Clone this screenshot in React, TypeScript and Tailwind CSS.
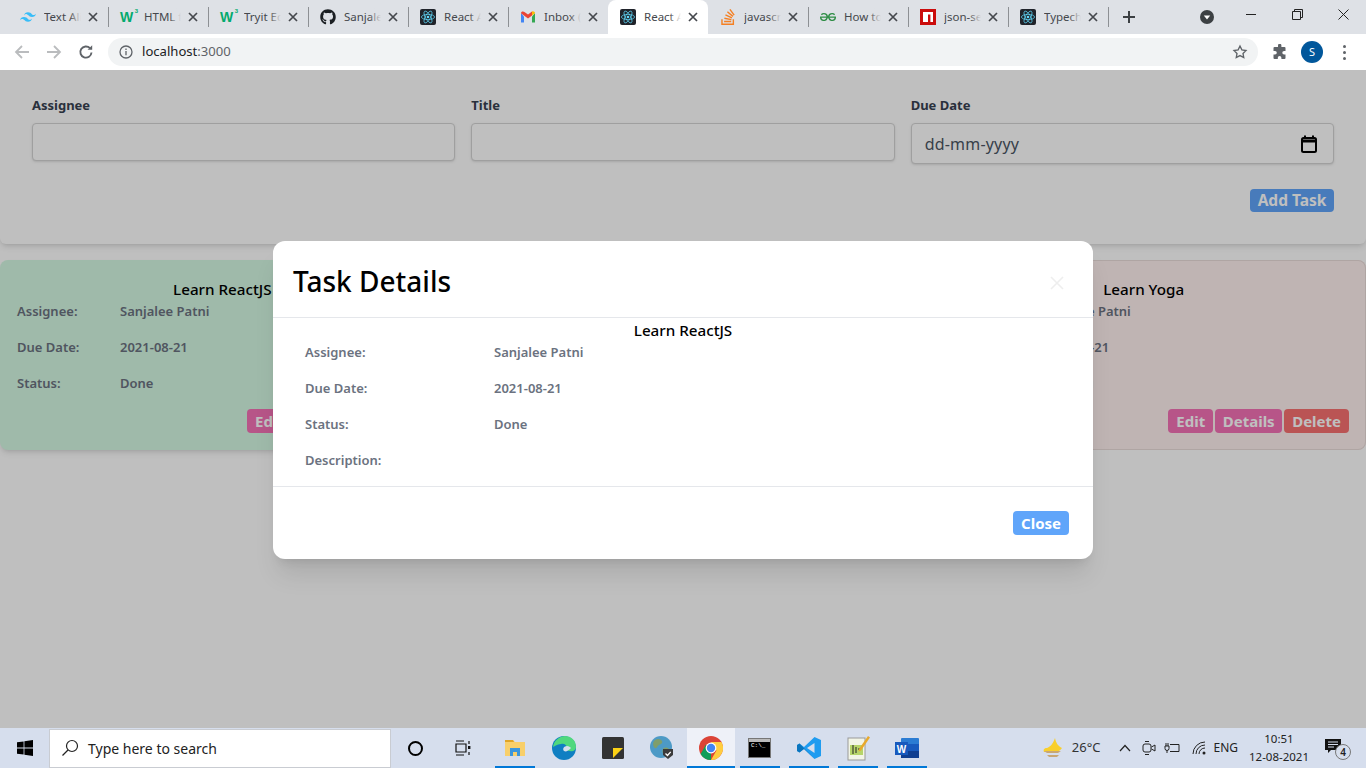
import { FaGithub } from "react-icons/fa";
import { SiGeeksforgeeks, SiStackoverflow, SiTailwindcss } from "react-icons/si";

function ReactIcon() {
  return (
    <svg width="16" height="16" viewBox="0 0 16 16">
      <rect width="16" height="16" rx="2" fill="#20232a" />
      <g fill="none" stroke="#61dafb" strokeWidth="0.7">
        <ellipse cx="8" cy="8" rx="6.6" ry="2.6" />
        <ellipse cx="8" cy="8" rx="6.6" ry="2.6" transform="rotate(60 8 8)" />
        <ellipse cx="8" cy="8" rx="6.6" ry="2.6" transform="rotate(120 8 8)" />
      </g>
      <circle cx="8" cy="8" r="1.3" fill="#61dafb" />
    </svg>
  );
}

function W3Icon() {
  return (
    <span className="relative flex h-4 w-4 items-center font-['Liberation_Sans',sans-serif] text-[14px] leading-none font-bold text-[#04aa6d]">
      W<span className="absolute -top-px -right-0.5 text-[6px] text-[#04aa6d]">3</span>
    </span>
  );
}

function GmailIcon() {
  return (
    <svg width="16" height="16" viewBox="0 0 16 16">
      <path d="M1 4v9.5h3V7.5z" fill="#4285f4" />
      <path d="M15 4v9.5h-3V7.5z" fill="#34a853" />
      <path d="M1 4.2 8 9.4l4-3V2.6l-4 3-3.2-2.4C3 1.9 1 2.6 1 4.2z" fill="#ea4335" />
      <path d="M12 2.6v3.8l3-2.2c0-1.6-2-2.3-3-1.6z" fill="#fbbc04" />
    </svg>
  );
}

function NpmIcon() {
  return (
    <svg width="16" height="16" viewBox="0 0 16 16">
      <rect width="16" height="16" fill="#cb0c0c" />
      <path d="M3 3h10v10h-2.6V5.6H8V13H3z" fill="#fff" />
    </svg>
  );
}

const tabs = [
  { title: "Text Ali", icon: <SiTailwindcss size={16} color="#38bdf8" /> },
  { title: "HTML f", icon: <W3Icon /> },
  { title: "Tryit Ed", icon: <W3Icon /> },
  { title: "Sanjale", icon: <FaGithub size={16} color="#1b1f23" /> },
  { title: "React A", icon: <ReactIcon /> },
  { title: "Inbox (", icon: <GmailIcon />, noSep: true },
  { title: "React A", icon: <ReactIcon />, active: true, noSep: true },
  { title: "javascr", icon: <SiStackoverflow size={16} color="#f48024" /> },
  { title: "How to", icon: <SiGeeksforgeeks size={16} color="#2f8d46" /> },
  { title: "json-se", icon: <NpmIcon /> },
  { title: "Typech", icon: <ReactIcon /> },
];

function TabClose() {
  return (
    <svg width="10" height="10" viewBox="0 0 10 10" stroke="#45484d" strokeWidth="1.7" className="shrink-0">
      <path d="M1 1l8 8M9 1l-8 8" />
    </svg>
  );
}

function BrowserChrome() {
  return (
    <div className="shrink-0 font-['Noto_Sans',sans-serif]">
      <div className="flex h-[34px] items-center bg-[#dee1e6] pl-2">
        {tabs.map((tab, i) => (
          <div
            key={i}
            className={
              tab.active
                ? "flex h-[34px] w-[100px] shrink-0 items-center rounded-t-lg bg-white pl-3"
                : "flex h-[34px] w-[100px] shrink-0 items-center pl-3"
            }
          >
            <span className="flex w-6 shrink-0 items-center">{tab.icon}</span>
            <div className="relative w-[37px] shrink-0 overflow-hidden text-[11.5px] whitespace-nowrap text-[#45484d]">
              {tab.title}
              <span
                className={
                  tab.active
                    ? "absolute inset-y-0 right-0 w-3 bg-gradient-to-r from-transparent to-white"
                    : "absolute inset-y-0 right-0 w-3 bg-gradient-to-r from-transparent to-[#dee1e6]"
                }
              />
            </div>
            <span className="ml-[7px] flex w-[10px] shrink-0 justify-center">
              <TabClose />
            </span>
            {!tab.noSep && <span className="-mr-px ml-auto h-[20px] w-px shrink-0 bg-[#8d9094]" />}
          </div>
        ))}
        <svg width="14" height="14" viewBox="0 0 14 14" stroke="#3c4043" strokeWidth="2" className="ml-[14px]">
          <path d="M7 1v12M1 7h12" />
        </svg>
        <svg width="14" height="14" viewBox="0 0 14 14" className="ml-[64px]">
          <circle cx="7" cy="7" r="7" fill="#3c4043" />
          <path d="M3.8 5.5h6.4L7 9.5z" fill="#fff" />
        </svg>
        <div className="ml-auto flex h-full items-start">
          <span className="flex h-[28px] w-[46px] items-center justify-center">
            <span className="h-px w-[10px] bg-[#222]" />
          </span>
          <span className="flex h-[28px] w-[46px] items-center justify-center">
            <svg width="11" height="11" viewBox="0 0 11 11" fill="none" stroke="#222">
              <path d="M.5 2.5h8v8h-8zM2.5 2.5v-2h8v8h-2" />
            </svg>
          </span>
          <span className="flex h-[28px] w-[46px] items-center justify-center">
            <svg width="11" height="11" viewBox="0 0 11 11" stroke="#222">
              <path d="M.5.5l10 10M10.5.5l-10 10" />
            </svg>
          </span>
        </div>
      </div>
      <div className="flex h-9 items-center bg-white">
        <svg width="16" height="16" viewBox="0 0 16 16" fill="none" stroke="#babcbe" strokeWidth="1.8" className="ml-[14px]">
          <path d="M15 8H2M8 2 2 8l6 6" />
        </svg>
        <svg width="16" height="16" viewBox="0 0 16 16" fill="none" stroke="#babcbe" strokeWidth="1.8" className="ml-4">
          <path d="M1 8h13M8 2l6 6-6 6" />
        </svg>
        <svg width="16" height="16" viewBox="0 0 16 16" fill="none" stroke="#5f6368" strokeWidth="1.9" className="ml-4">
          <path d="M13.5 8.5A5.6 5.6 0 1 1 12 4.2" />
          <path d="M14.2 1.2v4.6H9.6z" fill="#5f6368" stroke="none" />
        </svg>
        <div className="ml-[14px] flex h-7 flex-1 items-center rounded-full bg-[#f1f3f4] pl-[11px]">
          <svg width="14" height="14" viewBox="0 0 14 14" fill="none" stroke="#5f6368" strokeWidth="1.3">
            <circle cx="7" cy="7" r="6" />
            <path d="M7 6v4.2M7 3.6v1.4" />
          </svg>
          <span className="ml-[9px] text-[13.1px] text-[#202124]">
            localhost<span className="text-[#5f6368]">:3000</span>
          </span>
          <svg width="16" height="16" viewBox="0 0 24 24" fill="none" stroke="#5f6368" strokeWidth="2" className="mr-[10px] ml-auto">
            <path d="m12 3 2.8 5.8 6.2.9-4.5 4.4 1.1 6.3L12 17.4l-5.6 3 1.1-6.3L3 9.7l6.2-.9z" />
          </svg>
        </div>
        <svg width="16" height="16" viewBox="0 0 16 16" fill="#5f6368" className="ml-[14px]">
          <path d="M6 1.5a1.7 1.7 0 0 1 3.4 0V3h3.1a1 1 0 0 1 1 1v3h-1.4a1.8 1.8 0 0 0 0 3.6h1.4V14a1 1 0 0 1-1 1H9.4v-1.3a1.8 1.8 0 0 0-3.6 0V15H2.5a1 1 0 0 1-1-1v-3.4H3a1.8 1.8 0 0 0 0-3.6H1.5V4a1 1 0 0 1 1-1H6z" />
        </svg>
        <span className="ml-[13px] flex h-[22px] w-[22px] items-center justify-center rounded-full bg-[#01579b] text-[11px] text-white">
          S
        </span>
        <span className="mr-5 ml-5 flex flex-col gap-[3px]">
          <span className="h-[3px] w-[3px] rounded-full bg-[#5f6368]" />
          <span className="h-[3px] w-[3px] rounded-full bg-[#5f6368]" />
          <span className="h-[3px] w-[3px] rounded-full bg-[#5f6368]" />
        </span>
      </div>
    </div>
  );
}

function Field({ label }: { label: string }) {
  return (
    <div>
      <label className="mb-2 block text-[13px] leading-5 font-bold text-[#374151]">{label}</label>
      <input className="block h-[38px] w-full rounded border border-[#d4d4d4] bg-white shadow" />
    </div>
  );
}

function TaskFields({ rows }: { rows: string[][] }) {
  return (
    <>
      {rows.map(([label, value]) => (
        <div key={label} className="mb-4 flex h-5 items-center text-[13px] leading-5 font-semibold text-[#6b7280]">
          <span className="w-[103px] shrink-0">{label}</span>
          <span>{value}</span>
        </div>
      ))}
    </>
  );
}

function TaskCard({ title, className, status }: { title: string; className: string; status: string }) {
  return (
    <div className={`rounded-lg pt-[18px] pr-[17px] pb-[17px] pl-[17px] ${className}`}>
      <h3 className="text-center text-[15.2px] leading-[23px] font-medium text-black">{title}</h3>
      <TaskFields
        rows={[
          ["Assignee:", "Sanjalee Patni"],
          ["Due Date:", "2021-08-21"],
          ["Status:", status],
        ]}
      />
      <div className="flex justify-end gap-0.5">
        <button className="h-6 rounded bg-[#f472b6] px-2 text-[15px] leading-6 font-bold text-white">Edit</button>
        <button className="h-6 rounded bg-[#f472b6] px-[7.5px] text-[15px] leading-6 font-bold text-white">Details</button>
        <button className="h-6 rounded bg-[#f87171] px-2 text-[15px] leading-6 font-bold text-white">Delete</button>
      </div>
    </div>
  );
}

function TaskModal() {
  const rows = [
    ["Assignee:", "Sanjalee Patni"],
    ["Due Date:", "2021-08-21"],
    ["Status:", "Done"],
    ["Description:", ""],
  ];
  return (
    <div className="absolute inset-0 flex items-start justify-center bg-black/25 pt-[171px]">
      <div className="w-[820px] rounded-xl bg-white shadow-xl">
        <div className="flex h-[77px] items-center justify-between border-b border-[#e5e7eb] pr-[29px] pl-5">
          <h2 className="mt-1 text-[28px] leading-9 font-medium text-black">Task Details</h2>
          <svg width="14" height="14" viewBox="0 0 14 14" stroke="#eeeeee" strokeWidth="1.6" className="mt-[7px]">
            <path d="M1 1l12 12M13 1 1 13" />
          </svg>
        </div>
        <div className="border-b border-[#e5e7eb] pt-px">
          <h3 className="text-center text-[15.2px] leading-[23px] font-medium text-black">Learn ReactJS</h3>
          <div className="px-8">
            {rows.map(([label, value]) => (
              <div key={label} className="mb-4 flex h-5 items-center text-[13px] leading-5 font-semibold text-[#6b7280]">
                <span className="w-[189px] shrink-0">{label}</span>
                <span>{value}</span>
              </div>
            ))}
          </div>
        </div>
        <div className="flex justify-end p-6">
          <button className="h-6 rounded bg-[#60a5fa] px-2 text-[15px] leading-6 font-bold text-white">Close</button>
        </div>
      </div>
    </div>
  );
}

function TaskPage() {
  return (
    <main className="relative min-h-0 flex-1 overflow-hidden bg-white font-['Noto_Sans',sans-serif]">
      <section className="rounded-b-md bg-white px-8 pt-[25px] pb-8 shadow-md">
        <div className="grid grid-cols-3 items-start gap-4">
          <Field label="Assignee" />
          <Field label="Title" />
          <div>
            <label className="mb-2 block text-[13px] leading-5 font-bold text-[#374151]">Due Date</label>
            <div className="flex h-[41px] items-center justify-between rounded border border-[#d4d4d4] bg-white pr-4 pl-[13px] shadow">
              <span className="text-[16px] tracking-[0.2px] text-[#4b5563]">dd-mm-yyyy</span>
              <svg width="16" height="18" viewBox="0 0 16 18" fill="none" stroke="#000" strokeWidth="2">
                <rect x="1" y="3" width="14" height="14" rx="1.5" />
                <path d="M1 6h14" strokeWidth="3" />
                <path d="M4 .5v3M12 .5v3" />
              </svg>
            </div>
          </div>
        </div>
        <div className="mt-[25px] flex justify-end">
          <button className="h-[23px] w-[84px] rounded bg-[#60a5fa] text-[15.5px] leading-[23px] font-bold text-white">
            Add Task
          </button>
        </div>
      </section>
      <section className="mt-4 grid grid-cols-3 gap-4">
        <TaskCard title="Learn ReactJS" className="bg-[#d4f8e3] shadow-md" status="Done" />
        <div />
        <TaskCard title="Learn Yoga" className="bg-[#fff1ef] ring-1 ring-[#eadcda] ring-inset" status="Pending" />
      </section>
      <TaskModal />
    </main>
  );
}

function Slot({ children, active, line, className }: { children: React.ReactNode; active?: boolean; line?: boolean; className?: string }) {
  return (
    <div
      className={`relative flex h-10 shrink-0 items-center justify-center ${active ? "w-[48px] bg-[#eef1f8]" : "w-[49px]"} ${className ?? ""}`}
    >
      {children}
      {line && (
        <span className={`absolute bottom-0 h-0.5 bg-[#0078d7] ${active ? "inset-x-0" : "right-[4px] left-[5px]"}`} />
      )}
    </div>
  );
}

function Taskbar() {
  return (
    <footer className="flex h-10 shrink-0 items-center bg-[#d6deed] font-['Noto_Sans',sans-serif]">
      <div className="flex h-10 w-[49px] shrink-0 items-center justify-center">
        <svg width="16" height="16" viewBox="0 0 16 16" fill="#000">
          <path d="M0 2.3 6.6 1.4v6.1H0zM7.4 1.3 16 0v7.5H7.4zM0 8.5h6.6v6.1L0 13.7zM7.4 8.5H16V16l-8.6-1.3z" />
        </svg>
      </div>
      <div className="flex h-[39px] w-[342px] shrink-0 items-center border border-[#c9ccd2] bg-white pl-[11px]">
        <svg width="18" height="18" viewBox="0 0 18 18" fill="none" stroke="#222" strokeWidth="1.2">
          <circle cx="11" cy="7" r="5.5" />
          <path d="M7 11 1.5 16.5" />
        </svg>
        <span className="ml-[9px] text-[14px] text-[#222]">Type here to search</span>
      </div>
      <Slot>
        <span className="h-[15px] w-[15px] rounded-full border-2 border-black" />
      </Slot>
      <Slot>
        <svg width="18" height="16" viewBox="0 0 18 16" fill="none" stroke="#111" strokeWidth="1.2" className="-ml-[3px]">
          <path d="M2 1h8M2 15h8M2 4h10v8H2zM15 1v3M15 12v3" />
          <rect x="14" y="6" width="2.4" height="3" fill="#111" stroke="none" />
        </svg>
      </Slot>
      <Slot line className="ml-px">
        <svg width="22" height="20" viewBox="0 0 22 20">
          <path d="M1 2h8l2 2h10v14H1z" fill="#f8cf6a" />
          <path d="M1 2h8l1 2H1z" fill="#e0a526" />
          <path d="M6 10h10v8h-3v-4H9v4H6z" fill="#3a96dd" />
        </svg>
        <span className="absolute right-[4px] bottom-0 h-0.5 w-2 bg-[#6fb0e6]" />
      </Slot>
      <Slot>
        <svg width="24" height="24" viewBox="0 0 24 24">
          <circle cx="12" cy="12" r="12" fill="#0f7fc2" />
          <path d="M1 11C2 4 8 0 13 0c6 0 11 4 11 11 0 3-3 5-6 4-3 0-3-2-3-3 0-3-3-5-6-4-4 0-7 3-8 3z" fill="#4fd87e" />
          <path d="M12 15c-2-2 0-5 3-5 2 0 3 1 4 2-3 3-5 4-7 3z" fill="#d6deed" />
        </svg>
      </Slot>
      <Slot>
        <svg width="22" height="22" viewBox="0 0 22 22">
          <rect width="22" height="22" rx="1.5" fill="#333" />
          <path d="M11 11h10l-10 10z" fill="#fcd116" />
        </svg>
      </Slot>
      <Slot>
        <svg width="24" height="24" viewBox="0 0 24 24">
          <circle cx="11" cy="11" r="11" fill="#4d9ac6" />
          <path d="M5 4c3-2 6-1 7 1s-1 3-3 4-2 4-4 3-3-6 0-8zM14 12c3-1 5 0 5 2s-3 4-5 4-2-5 0-6z" fill="#7f9e6b" />
          <path d="M13 13h10v6l-5 4-5-4z" fill="#3b3b3b" />
          <path d="m15.5 17.5 2 2 3.2-3.6" fill="none" stroke="#fff" strokeWidth="1.3" />
        </svg>
      </Slot>
      <Slot active line className="ml-px">
        <svg width="24" height="24" viewBox="0 0 24 24">
          <circle cx="12" cy="12" r="12" fill="#db4437" />
          <path d="M12 24a12 12 0 0 1-10.4-6L7 8.5l5 9z" fill="#0f9d58" />
          <path d="M12 6h10.4A12 12 0 0 1 12 24l5.4-9.5z" fill="#ffcd40" />
          <circle cx="12" cy="12" r="5.4" fill="#fff" />
          <circle cx="12" cy="12" r="4.2" fill="#4285f4" />
        </svg>
      </Slot>
      <Slot line>
        <div className="flex h-[20px] w-[23px] flex-col border border-[#777] bg-black">
          <span className="h-[3px] bg-[#bbb]" />
          <span className="pl-0.5 font-['Liberation_Mono',monospace] text-[6px] leading-[8px] text-white">C:\_</span>
        </div>
      </Slot>
      <Slot line>
        <svg width="24" height="24" viewBox="0 0 24 24">
          <path d="M17.5 1 24 4v16l-6.5 3L7 13l-4.5 3.5L0 15V9l2.5-1.5L7 11z" fill="#1f9cf0" />
          <path d="M17.5 7 10 12l7.500 5z" fill="#d6deed" />
          <path d="M0 9l2.5-1.5L17.5 23 7 13l-4.5 3.5L0 15z" fill="#0065a9" opacity="0.7" />
        </svg>
      </Slot>
      <Slot line>
        <svg width="24" height="26" viewBox="0 0 24 26">
          <rect x="2" y="3" width="17" height="22" fill="#f2f5e6" stroke="#999" />
          <rect x="4" y="10" width="13" height="10" fill="#b6d56a" />
          <path d="M7 10v9M10 12v6M12 14h3" stroke="#222" strokeWidth="1" />
          <path d="m22 1 2 1.5-9 13-2.500 1 .5-2.500z" fill="#e8a92b" />
        </svg>
      </Slot>
      <Slot line>
        <svg width="24" height="22" viewBox="0 0 24 22">
          <rect x="6" y="1" width="18" height="20" rx="1" fill="#2b7cd3" />
          <rect x="6" y="7" width="18" height="7" fill="#185abd" />
          <rect x="6" y="14" width="18" height="7" fill="#103f91" />
          <rect x="0" y="5" width="13" height="13" fill="#185abd" />
          <text x="6.500" y="15.500" textAnchor="middle" fontSize="10" fontWeight="700" fill="#fff" fontFamily="Liberation Sans">
            W
          </text>
        </svg>
      </Slot>
      <div className="ml-auto flex h-full items-center text-[#222]">
        <svg width="24" height="24" viewBox="0 0 24 24">
          <path d="M14 2c1 5 3 8 7 10-2 3-5 4-8 4l-10 0C2 14 3 12 6 12c3-1 6-4 8-10z" fill="#f9cf2c" />
          <path d="M3 15h17l-3 2H6zM6 19h12l-2 2H8z" fill="#c8a773" />
        </svg>
        <span className="ml-[7px] text-[13px] text-[#333]">26°C</span>
        <svg width="12" height="8" viewBox="0 0 12 8" fill="none" stroke="#222" strokeWidth="1.2" className="ml-[19px]">
          <path d="M1 7l5-5.500L11 7" />
        </svg>
        <svg width="14" height="16" viewBox="0 0 14 16" fill="none" stroke="#222" className="ml-[11px]">
          <rect x="1" y="4" width="8" height="8" rx="2" />
          <path d="m9.500 7 3.500-2v6l-3.500-2M3 1.500h4M3 14.500h4" />
        </svg>
        <svg width="16" height="12" viewBox="0 0 16 12" fill="none" stroke="#222" className="ml-[8px]">
          <path d="M6 2.500h9v7H6M1 4h4v2.500A2 2 0 0 1 1 6.500zM2 1v3M4 1v3M3 8.500V11" />
        </svg>
        <svg width="15" height="14" viewBox="0 0 15 14" fill="none" stroke="#222" className="ml-[12px]">
          <path d="M1 13A12 12 0 0 1 13 1M4 13a9 9 0 0 1 9-9M7 13a6 6 0 0 1 6-6" />
          <circle cx="12" cy="12" r="1.500" fill="#222" stroke="none" />
        </svg>
        <span className="ml-[6px] text-[12px] text-[#222]">ENG</span>
        <div className="ml-[12px] flex w-[58px] flex-col items-center text-[11.5px] leading-[18px] text-[#222]">
          <span>10:51</span>
          <span className="whitespace-nowrap">12-08-2021</span>
        </div>
        <div className="relative mr-[23px] ml-[17px] h-[18px] w-[18px]">
          <svg width="17" height="15" viewBox="0 0 17 15" fill="#111">
            <path d="M0 0h16v11H6l-3 3v-3H0z" />
            <path d="M3 3h10M3 5.500h10M3 8h6" stroke="#d6deed" />
          </svg>
          <span className="absolute -right-2 -bottom-[3px] flex h-4 w-4 items-center justify-center rounded-full border border-[#777] bg-[#d6deed] text-[10px] font-semibold text-[#222]">
            4
          </span>
        </div>
      </div>
    </footer>
  );
}

export default function App() {
  return (
    <div className="flex h-screen w-full flex-col overflow-hidden">
      <BrowserChrome />
      <TaskPage />
      <Taskbar />
    </div>
  );
}
